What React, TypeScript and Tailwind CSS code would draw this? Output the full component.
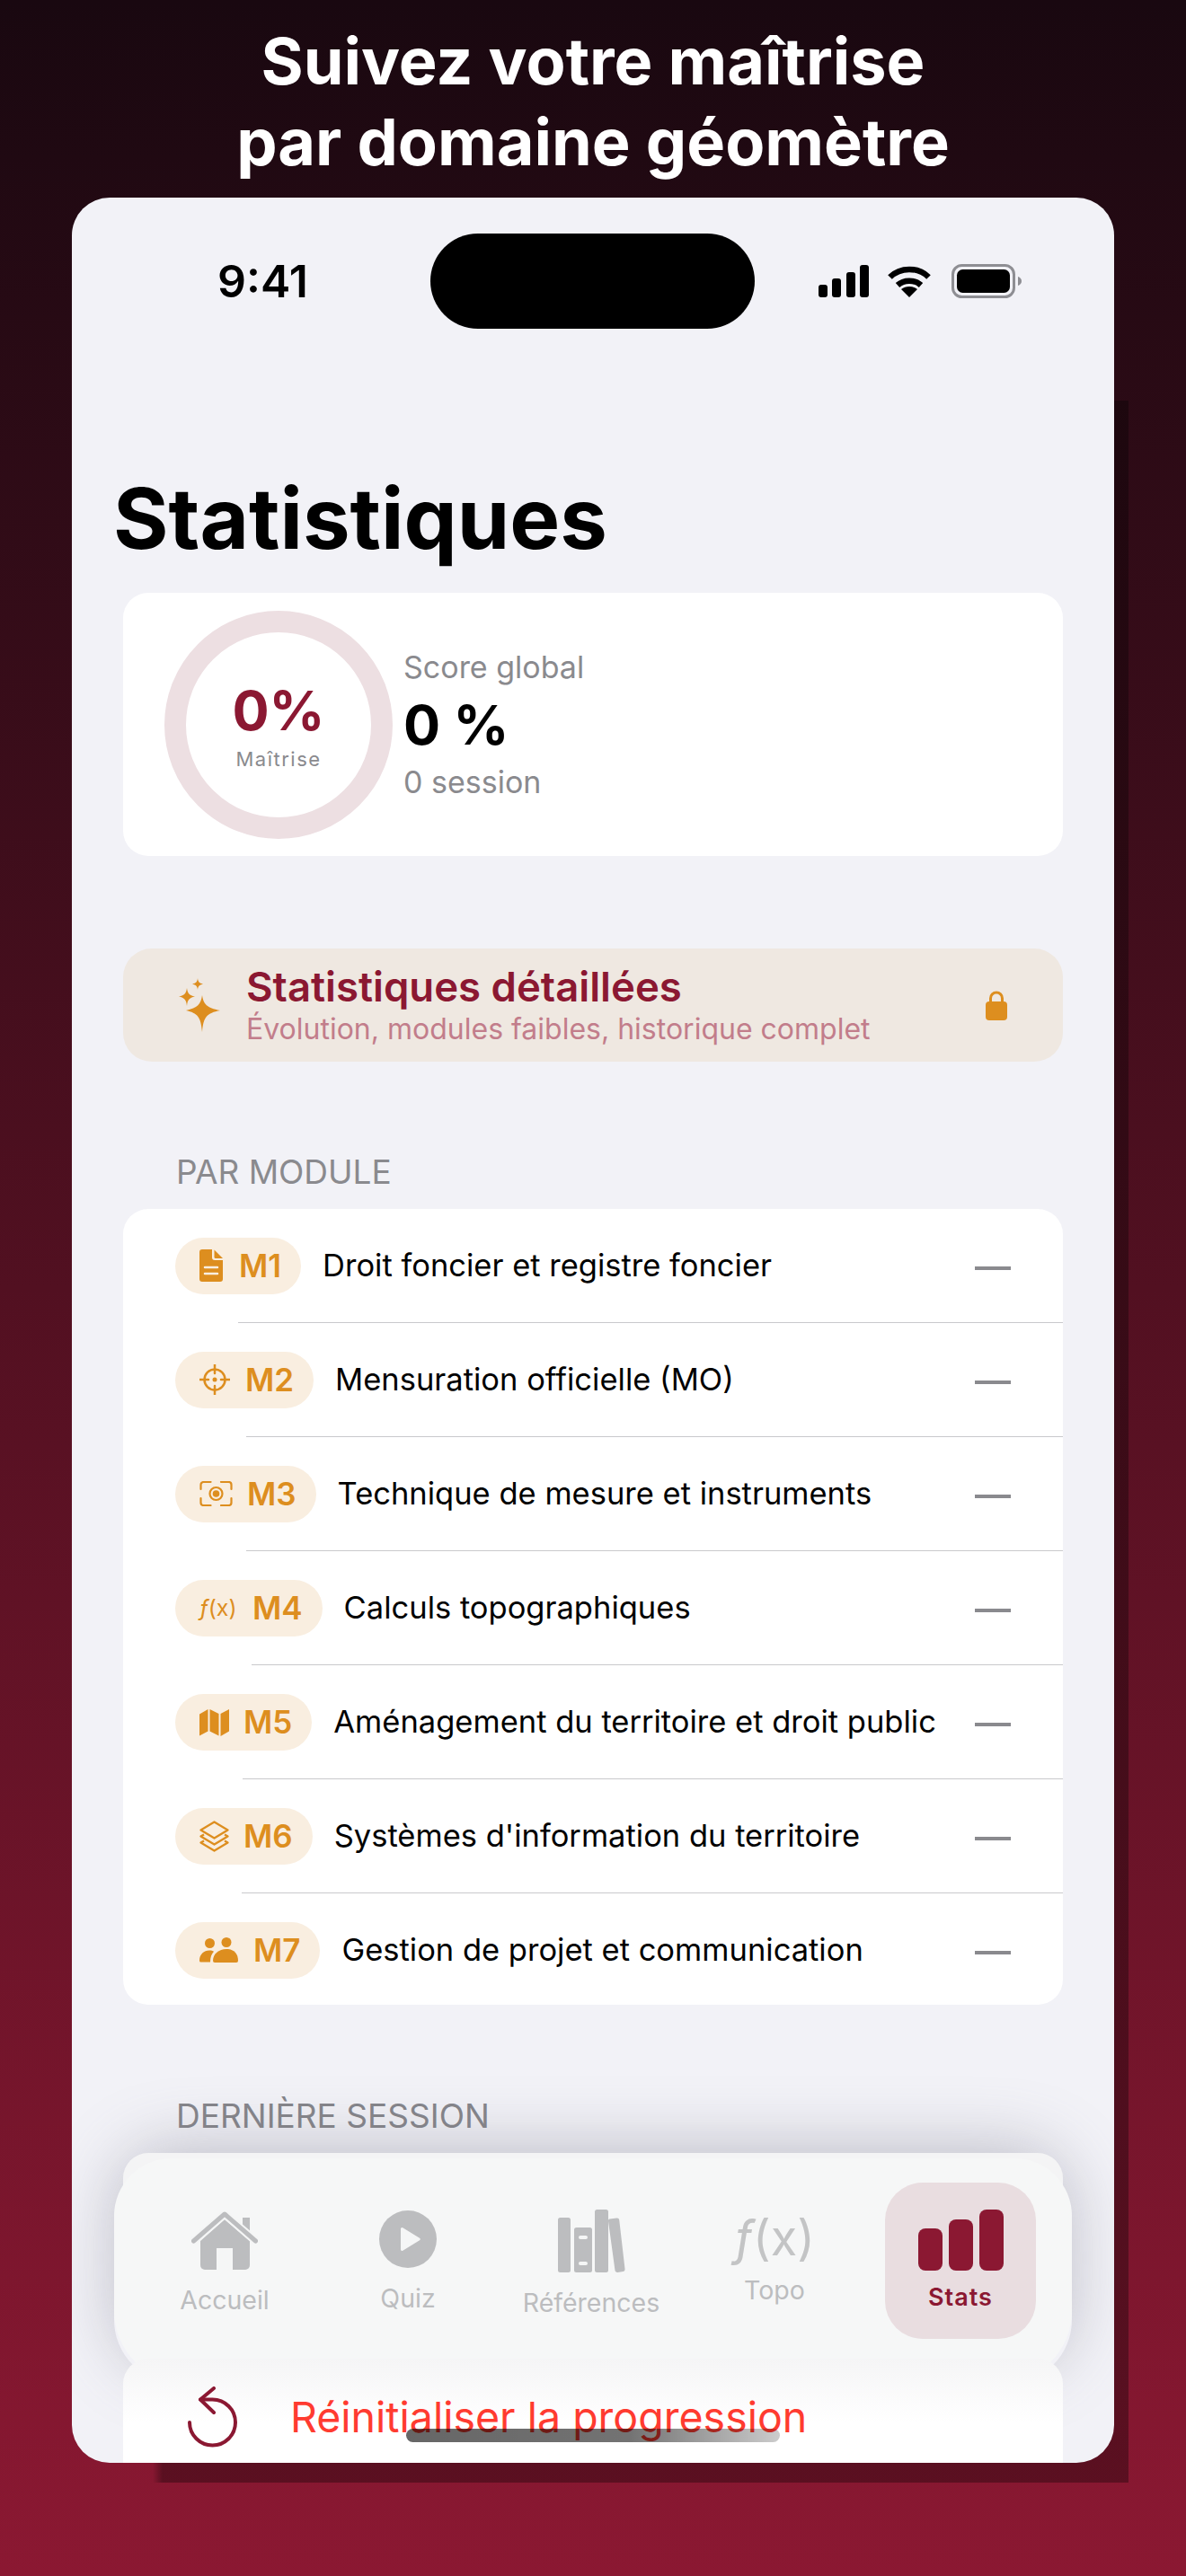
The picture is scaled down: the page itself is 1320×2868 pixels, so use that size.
import type { ReactNode } from "react";

const AMBER = "#dd8e1f";

function DocIcon() {
  return (
    <svg width="26" height="36" viewBox="0 0 26 36" className="shrink-0">
      <path
        d="M3 0h11v9a3 3 0 0 0 3 3h9v21a3 3 0 0 1-3 3H3a3 3 0 0 1-3-3V3a3 3 0 0 1 3-3z"
        fill={AMBER}
      />
      <path d="M16.500 0.500L26 10h-8a1.500 1.500 0 0 1-1.500-1.500z" fill={AMBER} />
      <path d="M6 20h14M6 27h14" stroke="#f9eee0" strokeWidth="2.500" strokeLinecap="round" />
    </svg>
  );
}

function ScopeIcon() {
  return (
    <svg width="34" height="34" viewBox="0 0 34 34" fill="none" stroke={AMBER} strokeWidth="2.500" className="shrink-0">
      <circle cx="17" cy="17" r="11.500" />
      <circle cx="17" cy="17" r="2.500" fill={AMBER} stroke="none" />
      <path d="M17 0v10M17 24v10M0 17h10M24 17h10" strokeLinecap="round" />
    </svg>
  );
}

function MeterIcon() {
  return (
    <svg width="37" height="28" viewBox="0 0 37 28" fill="none" stroke={AMBER} strokeWidth="2.200" className="shrink-0">
      <path d="M1.500 9V4a3 3 0 0 1 3-3h8M24 1h8.500a3 3 0 0 1 3 3v5M35.500 19v5a3 3 0 0 1-3 3H24M12.500 27h-8a3 3 0 0 1-3-3v-5" strokeLinecap="round" />
      <circle cx="18.500" cy="14" r="7" />
      <circle cx="18.500" cy="14" r="3.800" fill={AMBER} stroke="none" />
    </svg>
  );
}

function MapIcon() {
  return (
    <svg width="33" height="31" viewBox="0 0 33 31" className="shrink-0">
      <path d="M0 6.500L9.500 1v24.500L0 30.500z" fill={AMBER} />
      <path d="M11.500 1L21.500 6v24.500l-10-5z" fill={AMBER} />
      <path d="M23.500 6L33 1v24.500l-9.500 5.500z" fill={AMBER} />
    </svg>
  );
}

function StackIcon() {
  return (
    <svg width="33" height="35" viewBox="0 0 33 35" fill="none" stroke={AMBER} strokeWidth="2.300" strokeLinejoin="round" className="shrink-0">
      <path d="M16.500 1.500L31.500 10.500L16.500 19.500L1.500 10.500z" />
      <path d="M5 15.500L1.500 17.500L16.500 26.500L31.500 17.500L28 15.500" />
      <path d="M5 22.500L1.500 24.500L16.500 33.500L31.500 24.500L28 22.500" />
    </svg>
  );
}

function PeopleIcon() {
  return (
    <svg width="43" height="28" viewBox="0 0 43 28" fill={AMBER} className="shrink-0">
      <circle cx="11.500" cy="6.500" r="5.500" />
      <circle cx="30" cy="5.500" r="5.500" />
      <path d="M0 25.500C0 19 5 14.500 11 14.500c2.200 0 3.800.5 5 1.300C13.500 18.500 12 22 12 27.500H1.500A1.500 1.500 0 0 1 0 26z" />
      <path d="M15 26c0-7.500 6.500-13 15-13s13 5.500 13 13a2 2 0 0 1-2 2H17a2 2 0 0 1-2-2z" />
    </svg>
  );
}

function FxSmall() {
  return (
    <span className="w-[42px] shrink-0 whitespace-nowrap text-[25px] leading-none font-normal text-[#dd8e1f]">
      <span className="italic">ƒ</span>(x)
    </span>
  );
}

function Sparkles() {
  return (
    <svg width="46" height="60" viewBox="0 0 46 60" fill={AMBER}>
      <path d="M26 19c1.500 10 5 14 20 17-15 3-18.500 7-20 24-1.500-17-5-21-18-24 13-3 16.500-7 18-17z" />
      <path d="M9 11c.8 6 2.500 8 9 9.500-6.500 1.500-8.200 3.500-9 10.500-.8-7-2.500-9-9-10.500 6.500-1.500 8.200-3.500 9-9.500z" />
      <path d="M21 0c.5 4 1.500 5.500 6 6.500-4.500 1-5.500 2.500-6 6.500-.5-4-1.500-5.500-6-6.500 4.500-1 5.500-2.500 6-6.500z" />
    </svg>
  );
}

function Lock() {
  return (
    <svg width="24" height="34" viewBox="0 0 24 34" className="shrink-0">
      <path d="M5.500 15V9.500a6.500 6.500 0 0 1 13 0V15" fill="none" stroke={AMBER} strokeWidth="3" />
      <rect x="0" y="13" width="24" height="21" rx="4" fill={AMBER} />
    </svg>
  );
}

function HomeTab() {
  return (
    <svg width="74" height="65" viewBox="0 0 74 65" fill="#bcbdbf">
      <rect x="57" y="7" width="8" height="18" />
      <path d="M37 9L65 33V60a5 5 0 0 1-5 5H15a5 5 0 0 1-5-5V33z" />
      <path d="M2.500 33L37 3l34.500 30" fill="none" stroke="#f5f6f6" strokeWidth="9" />
      <path d="M2.500 33L37 3l34.500 30" fill="none" stroke="#bcbdbf" strokeWidth="5" strokeLinecap="round" strokeLinejoin="round" />
      <rect x="28" y="41" width="18" height="24" fill="#f5f6f6" />
    </svg>
  );
}

function QuizTab() {
  return (
    <svg width="64" height="64" viewBox="0 0 64 64">
      <circle cx="32" cy="32" r="32" fill="#bcbdbf" />
      <path d="M24 20.500v23a1.500 1.500 0 0 0 2.300 1.300L45 33.300a1.500 1.500 0 0 0 0-2.600L26.300 19.200A1.500 1.500 0 0 0 24 20.500z" fill="#f5f6f6" />
    </svg>
  );
}

function BooksTab() {
  return (
    <svg width="75" height="70" viewBox="0 0 75 70" fill="#bcbdbf">
      <rect x="0" y="9" width="14" height="61" rx="2.500" />
      <rect x="18" y="20" width="20" height="50" rx="2.500" />
      <rect x="41" y="0" width="15" height="70" rx="2.500" />
      <path d="M57.500 10.500l8-1c1.500-.2 2.500.7 2.700 2L74.500 66c.2 1.500-.7 2.700-2 2.900l-6 1c-1.500.2-2.800-.8-3-2.200L56 13c-.2-1.300.2-2.300 1.500-2.500z" />
      <rect x="23" y="29" width="10" height="4" rx="2" fill="#f5f6f6" />
      <rect x="23" y="58" width="10" height="4" rx="2" fill="#f5f6f6" />
    </svg>
  );
}

function StatsTab() {
  return (
    <svg width="95" height="68" viewBox="0 0 95 68" fill="#8b1832">
      <rect x="0" y="21" width="27" height="47" rx="8" />
      <rect x="34" y="11" width="27" height="57" rx="8" />
      <rect x="68" y="0" width="27" height="68" rx="8" />
    </svg>
  );
}

function StatusIcons() {
  return (
    <div className="flex items-center">
      <svg width="56" height="36" viewBox="0 0 56 36" fill="#000">
        <rect x="0" y="22" width="10" height="14" rx="3" />
        <rect x="15" y="15" width="10" height="21" rx="3" />
        <rect x="31" y="8" width="10" height="28" rx="3" />
        <rect x="46" y="0" width="10" height="36" rx="3" />
      </svg>
      <svg width="48" height="36" viewBox="0 0 48 36" className="ml-[21px]" fill="none" stroke="#000" strokeWidth="6.500">
        <path d="M2.500 13.500C14 2 34 2 45.500 13.500" />
        <path d="M11 22.500c7-6.500 19-6.500 26 0" />
        <path d="M24 36L15 27c5-4 13-4 18 0z" fill="#000" stroke="none" />
      </svg>
      <svg width="78" height="38" viewBox="0 0 78 38" className="ml-[23px]">
        <rect x="1.500" y="1.500" width="68" height="35" rx="10" fill="none" stroke="#8e8e93" strokeWidth="3" />
        <rect x="6" y="6" width="59" height="26" rx="6.500" fill="#000" />
        <path d="M74 14c2.500.8 4 2.600 4 5s-1.500 4.200-4 5z" fill="#8e8e93" />
      </svg>
    </div>
  );
}

type Row = {
  code: string;
  label: string;
  icon: ReactNode;
  gap: string;
  divider: string;
};

const ROWS: Row[] = [
  { code: "M1", label: "Droit foncier et registre foncier", icon: <DocIcon />, gap: "ml-[18px]", divider: "ml-[128px]" },
  { code: "M2", label: "Mensuration officielle (MO)", icon: <ScopeIcon />, gap: "ml-[17px]", divider: "ml-[137px]" },
  { code: "M3", label: "Technique de mesure et instruments", icon: <MeterIcon />, gap: "ml-[16px]", divider: "ml-[137px]" },
  { code: "M4", label: "Calculs topographiques", icon: <FxSmall />, gap: "ml-[17px]", divider: "ml-[143px]" },
  { code: "M5", label: "Aménagement du territoire et droit public", icon: <MapIcon />, gap: "ml-[16px]", divider: "ml-[133px]" },
  { code: "M6", label: "Systèmes d'information du territoire", icon: <StackIcon />, gap: "ml-[16px]", divider: "ml-[132px]" },
  { code: "M7", label: "Gestion de projet et communication", icon: <PeopleIcon />, gap: "ml-[17px]", divider: "" },
];

function ModuleRow({ row }: { row: Row }) {
  return (
    <div className="flex flex-col">
      <div className="flex h-[126px] items-center px-[58px]">
        <div className="flex h-[63px] shrink-0 items-center rounded-full bg-[#f9eee0] pl-[27px] pr-[22px]">
          {row.icon}
          <span className={`${row.gap} text-[35px] leading-none font-semibold text-[#dd8e1f]`}>{row.code}</span>
        </div>
        <span className="ml-[24px] flex-1 whitespace-nowrap text-[34.5px] leading-none text-black">{row.label}</span>
        <span className="mt-[5px] h-[4px] w-[40px] shrink-0 bg-[#8a8a8e]" />
      </div>
      {row.divider ? <div className={`${row.divider} h-px bg-[#c9c9cc]`} /> : null}
    </div>
  );
}

function Tab({ label, icon, offset, labelGap }: { label: string; icon: ReactNode; offset: string; labelGap: string }) {
  return (
    <div className={`flex w-[170px] shrink-0 flex-col items-center ${offset}`}>
      {icon}
      <span className={`${labelGap} text-[28.5px] leading-[34px] text-[#bcbdbf]`}>{label}</span>
    </div>
  );
}

function TabBar() {
  return (
    <div className="absolute left-[47px] top-[2183px] flex h-[250px] w-[1066px] items-start gap-[34px] rounded-t-[64px] rounded-b-[80px] bg-[#f6f7f7] pl-[38px]">
      <Tab label="Accueil" icon={<HomeTab />} offset="mt-[59px]" labelGap="mt-[17px]" />
      <Tab label="Quiz" icon={<QuizTab />} offset="mt-[58px]" labelGap="mt-[17px]" />
      <Tab label="Références" icon={<BooksTab />} offset="mt-[57px]" labelGap="mt-[17px]" />
      <Tab
        label="Topo"
        icon={
          <span className="text-[54px] leading-[72px] text-[#c3c4c5]">
            <span className="italic">ƒ</span>(x)
          </span>
        }
        offset="mt-[53px]"
        labelGap="mt-[5px]"
      />
      <div className="ml-[4px] mt-[27px] flex h-[174px] w-[168px] shrink-0 flex-col items-center rounded-[42px] bg-[#e9dde0] pt-[30px]">
        <StatsTab />
        <span className="mt-[13px] text-[27px] leading-[34px] font-semibold tracking-[1px] text-[#8b1832]">Stats</span>
      </div>
    </div>
  );
}

export default function App() {
  return (
    <div className="relative h-[2868px] w-[1320px] overflow-hidden bg-[linear-gradient(180deg,#190810_0%,#8b1832_100%)] font-['Inter',sans-serif]">
      <h1 className="pt-[23px] text-center text-[72px] leading-[90px] font-bold text-white">
        Suivez votre maîtrise
        <br />
        par domaine géomètre
      </h1>

      <div className="absolute left-[170px] top-[446px] h-[2318px] w-[1086px] bg-[linear-gradient(90deg,rgba(0,0,0,0)_0%,rgba(0,0,0,0.33)_1%)]" />

      <div className="relative ml-[80px] mt-[17px] h-[2522px] w-[1160px] overflow-hidden rounded-[42px] bg-[#f2f2f7]">
        <div className="flex h-[146px] items-center pt-[40px]">
          <span className="ml-[162px] w-[237px] text-[50px] leading-[60px] font-semibold text-black">9:41</span>
          <div className="h-[106px] w-[361px] rounded-[53px] bg-black" />
          <div className="ml-[71px]">
            <StatusIcons />
          </div>
        </div>

        <h2 className="ml-[46px] mt-[155px] text-[94px] leading-[112px] font-bold text-black">Statistiques</h2>

        <section className="ml-[57px] mt-[27px] flex h-[293px] w-[1046px] items-center rounded-[28px] bg-white pl-[46px]">
          <div className="flex h-[254px] w-[254px] shrink-0 flex-col items-center justify-center rounded-full border-[24px] border-[#eddfe2]">
            <span className="text-[61px] leading-[70px] font-bold text-[#8b1832]">0%</span>
            <span className="mt-[6px] text-[22px] leading-[26px] tracking-[1.5px] text-[#8a8a8e]">Maîtrise</span>
          </div>
          <div className="ml-[12px] flex flex-col">
            <span className="text-[34px] leading-[42px] text-[#8a8a8e]">Score global</span>
            <span className="mt-[6px] text-[61px] leading-[74px] font-bold text-black">0 %</span>
            <span className="mt-[6px] text-[34px] leading-[42px] text-[#8a8a8e]">0 session</span>
          </div>
        </section>

        <section className="ml-[57px] mt-[103px] flex h-[126px] w-[1046px] items-center rounded-[32px] bg-[#efe8e1] px-[62px]">
          <Sparkles />
          <div className="ml-[29px] flex flex-1 flex-col">
            <span className="text-[45.5px] leading-[50px] font-semibold text-[#8b1832]">Statistiques détaillées</span>
            <span className="mt-[3px] text-[32px] leading-[38px] text-[#c27d8b]">Évolution, modules faibles, historique complet</span>
          </div>
          <Lock />
        </section>

        <h3 className="ml-[116px] mt-[100px] text-[37px] leading-[46px] text-[#8a8a8e]">PAR MODULE</h3>

        <section className="ml-[57px] mt-[18px] h-[886px] w-[1046px] rounded-[28px] bg-white">
          {ROWS.map((row) => (
            <ModuleRow key={row.code} row={row} />
          ))}
        </section>

        <h3 className="ml-[116px] mt-[101px] text-[37px] leading-[46px] text-[#85858a]">DERNIÈRE SESSION</h3>

        <div className="absolute left-[47px] top-[2183px] h-[250px] w-[1066px] rounded-[70px] shadow-[0_-14px_70px_rgba(110,110,130,0.38)]" />

        <section className="relative ml-[57px] mt-[18px] h-[210px] w-[1046px] rounded-[28px] bg-[#f4f4f5]" />

        <TabBar />

        <section className="relative z-10 ml-[57px] mt-[19px] flex h-[160px] w-[1046px] items-start rounded-[28px] bg-[linear-gradient(180deg,#f5f5f6_0%,#ffffff_45%)] pl-[72px] pt-[31px]">
          <svg width="56" height="68" viewBox="0 0 56 68" fill="none" stroke="#8b1832" strokeWidth="4" strokeLinecap="round" strokeLinejoin="round">
            <path d="M2 40a25.500 25.500 0 1 0 25.500-25.500H14" />
            <path d="M29 2L14 14.500L29 29" />
          </svg>
          <span className="ml-[58px] mt-[5px] whitespace-nowrap text-[46.5px] leading-[58px] text-[#ff3b30]">Réinitialiser la progression</span>
        </section>

        <div className="absolute left-[372px] top-[2484px] z-20 h-[15px] w-[416px] rounded-full bg-[linear-gradient(90deg,rgba(0,0,0,0.6)_0%,rgba(0,0,0,0.55)_60%,rgba(0,0,0,0.2)_100%)]" />
      </div>
    </div>
  );
}
